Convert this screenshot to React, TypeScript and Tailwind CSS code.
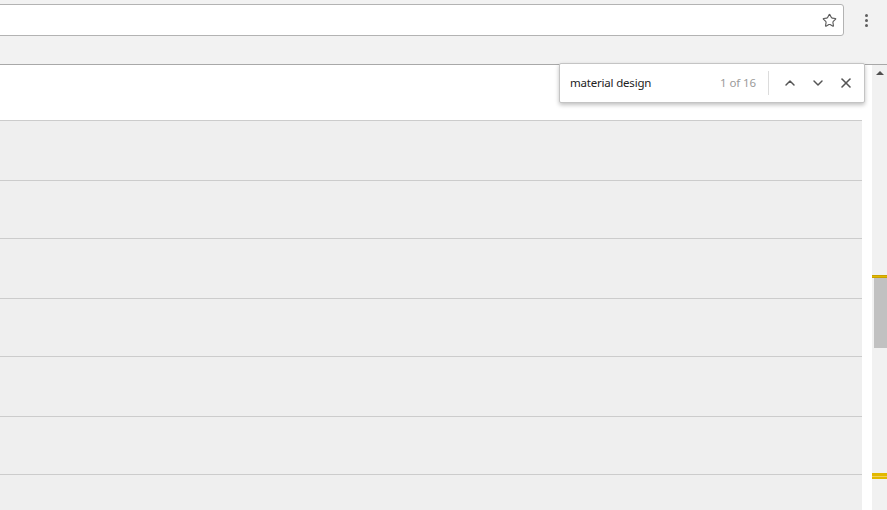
import { Star, ChevronUp, ChevronDown, X } from 'lucide-react'

const rowHeights = [60, 58, 60, 58, 60, 58, 60]

export default function App() {
  return (
    <div className="relative w-[887px] h-[510px] overflow-hidden bg-[#f2f2f2] font-['Noto_Sans',sans-serif]">
      {/* Toolbar */}
      <div className="h-[65px] border-b border-[#a8a8a8] pt-1 flex">
        <div className="flex-1 h-8 -ml-1 bg-white border border-[#b3b3b3] rounded-r-[3px] flex items-center justify-end pr-[6px]">
          <Star className="w-[15px] h-[15px] text-[#5a5a5a]" strokeWidth={1.8} />
        </div>
        <div className="w-[43px] h-8 flex flex-col items-center justify-center gap-[2px] pl-[2px]">
          <span className="w-[3px] h-[3px] rounded-full bg-[#5f5f5f]" />
          <span className="w-[3px] h-[3px] rounded-full bg-[#5f5f5f]" />
          <span className="w-[3px] h-[3px] rounded-full bg-[#5f5f5f]" />
        </div>
      </div>

      {/* Page */}
      <div className="flex h-[445px]">
        <div className="w-[862px] flex flex-col">
          <div className="h-[55px] bg-white shrink-0" />
          {rowHeights.map((h, i) => (
            <div
              key={i}
              className={`shrink-0 bg-[#efefef] border-t border-[#cccccc] ${h === 60 ? 'h-[60px]' : 'h-[58px]'}`}
            />
          ))}
        </div>
        <div className="w-[10px] bg-white" />
        <div className="relative flex-1 bg-[#f1f1f1]">
          <div className="flex justify-center pt-[6px]">
            <div className="w-0 h-0 border-l-[4px] border-r-[4px] border-b-[4px] border-l-transparent border-r-transparent border-b-[#505050]" />
          </div>
          <div className="absolute left-[2px] right-0 top-[212px] h-[71px] bg-[#c1c1c1]" />
          <div className="absolute left-0 right-0 top-[210px] h-[3px] bg-[#e2b800] border-y border-[#c9a100]" />
          <div className="absolute left-0 right-0 top-[408px] h-[6px] bg-[#e2b800] flex flex-col justify-center">
            <div className="h-px bg-[#f3d25a]" />
          </div>
        </div>
      </div>

      {/* Find bar */}
      <div className="absolute left-[559px] top-[63px] w-[306px] h-[40px] bg-white border border-[#c4c4c4] rounded-[2px] shadow-[0_2px_4px_rgba(0,0,0,0.25)] flex items-center pl-[10px]">
        <span className="text-[11.5px] text-[#222] tracking-[-0.2px] flex-1">material design</span>
        <span className="text-[11.5px] text-[#9b9b9b] tracking-[-0.1px] pr-[12px]">1 of 16</span>
        <div className="w-px h-[24px] bg-[#dcdcdc]" />
        <div className="flex items-center gap-[12px] pl-[13px] pr-[10px]">
          <ChevronUp className="w-4 h-4 text-[#555]" strokeWidth={2.2} />
          <ChevronDown className="w-4 h-4 text-[#555]" strokeWidth={2.2} />
          <X className="w-4 h-4 text-[#555]" strokeWidth={2.4} />
        </div>
      </div>
    </div>
  )
}
